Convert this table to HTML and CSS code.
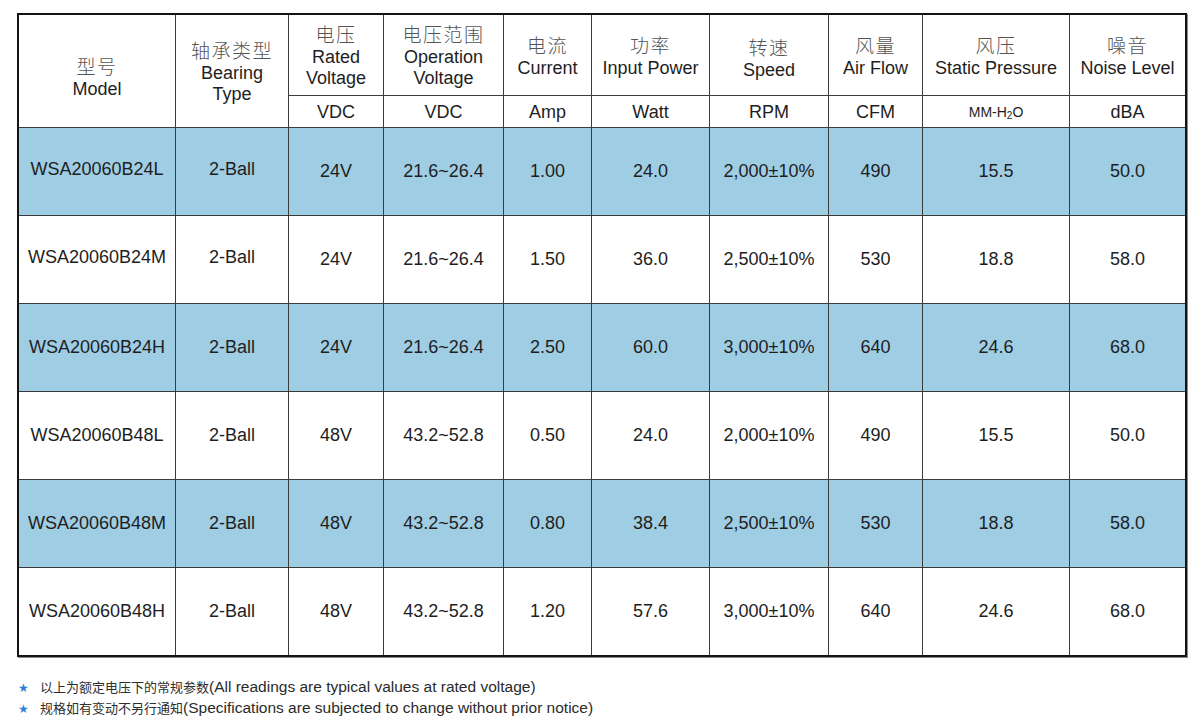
FILE: index.html
```html
<!DOCTYPE html>
<html lang="zh">
<head>
<meta charset="utf-8">
<title>WSA20060 规格表</title>
<link rel="stylesheet" href="styles.css">
</head>
<body>
<div class="page">
  <table class="spec">
    <colgroup>
      <col class="c1"><col class="c2"><col class="c3"><col class="c4"><col class="c5">
      <col class="c6"><col class="c7"><col class="c8"><col class="c9"><col class="c10">
    </colgroup>
    <thead>
      <tr class="head-top">
        <th rowspan="2" class="model-h"><span class="zh">型号</span><span class="en">Model</span></th>
        <th rowspan="2"><span class="zh">轴承类型</span><span class="en">Bearing<br>Type</span></th>
        <th><span class="zh">电压</span><span class="en">Rated<br>Voltage</span></th>
        <th><span class="zh">电压范围</span><span class="en">Operation<br>Voltage</span></th>
        <th><span class="zh">电流</span><span class="en">Current</span></th>
        <th><span class="zh">功率</span><span class="en">Input Power</span></th>
        <th class="speed-h"><span class="zh">转速</span><span class="en">Speed</span></th>
        <th><span class="zh">风量</span><span class="en">Air Flow</span></th>
        <th><span class="zh">风压</span><span class="en">Static Pressure</span></th>
        <th class="last"><span class="zh">噪音</span><span class="en">Noise Level</span></th>
      </tr>
      <tr class="units">
        <th>VDC</th>
        <th>VDC</th>
        <th>Amp</th>
        <th>Watt</th>
        <th>RPM</th>
        <th>CFM</th>
        <th class="small">MM-H<sub>2</sub>O</th>
        <th class="last">dBA</th>
      </tr>
    </thead>
    <tbody>
      <tr class="blue">
        <td class="hi">WSA20060B24L</td><td class="hi">2-Ball</td><td>24V</td><td>21.6~26.4</td><td>1.00</td>
        <td>24.0</td><td>2,000±10%</td><td>490</td><td>15.5</td><td class="last">50.0</td>
      </tr>
      <tr>
        <td class="hi">WSA20060B24M</td><td class="hi">2-Ball</td><td>24V</td><td>21.6~26.4</td><td>1.50</td>
        <td>36.0</td><td>2,500±10%</td><td>530</td><td>18.8</td><td class="last">58.0</td>
      </tr>
      <tr class="blue">
        <td>WSA20060B24H</td><td>2-Ball</td><td>24V</td><td>21.6~26.4</td><td>2.50</td>
        <td>60.0</td><td>3,000±10%</td><td>640</td><td>24.6</td><td class="last">68.0</td>
      </tr>
      <tr>
        <td>WSA20060B48L</td><td>2-Ball</td><td>48V</td><td>43.2~52.8</td><td>0.50</td>
        <td>24.0</td><td>2,000±10%</td><td>490</td><td>15.5</td><td class="last">50.0</td>
      </tr>
      <tr class="blue">
        <td>WSA20060B48M</td><td>2-Ball</td><td>48V</td><td>43.2~52.8</td><td>0.80</td>
        <td>38.4</td><td>2,500±10%</td><td>530</td><td>18.8</td><td class="last">58.0</td>
      </tr>
      <tr class="end">
        <td>WSA20060B48H</td><td>2-Ball</td><td>48V</td><td>43.2~52.8</td><td>1.20</td>
        <td>57.6</td><td>3,000±10%</td><td>640</td><td>24.6</td><td class="last">68.0</td>
      </tr>
    </tbody>
  </table>

  <ul class="notes">
    <li><span class="star">★</span><span class="nzh">以上为额定电压下的常规参数</span><span class="nen">(All readings are typical values at rated voltage)</span></li>
    <li><span class="star">★</span><span class="nzh">规格如有变动不另行通知</span><span class="nen">(Specifications are subjected to change without prior notice)</span></li>
  </ul>
</div>
</body>
</html>
```

FILE: styles.css
```css
html, body {
  margin: 0;
  padding: 0;
  background: #ffffff;
}

.page {
  padding: 13px 0 0 17px;
  font-family: "Liberation Sans", Arial, "Noto Sans CJK SC", sans-serif;
  color: #1e1e1e;
}

.spec {
  width: 1170px;
  table-layout: fixed;
  border-collapse: separate;
  border-spacing: 0;
  border: 2px solid #141414;
  box-shadow: 1px 1px 0 #8a8a8a;
}

.c1 { width: 157px; }
.c2 { width: 113px; }
.c3 { width: 95px; }
.c4 { width: 120px; }
.c5 { width: 88px; }
.c6 { width: 118px; }
.c7 { width: 119px; }
.c8 { width: 94px; }
.c9 { width: 147px; }
.c10 { width: 115px; }

.spec th,
.spec td {
  padding: 0;
  text-align: center;
  vertical-align: middle;
  border-right: 1px solid #3a3a3a;
  border-bottom: 1px solid #3a3a3a;
  font-weight: normal;
  font-size: 18px;
  line-height: 21px;
  color: #1e1e1e;
  box-sizing: border-box;
}

.spec .last {
  border-right: none;
}

.head-top th {
  height: 81px;
}

.head-top .model-h {
  padding-top: 10px;
}

.head-top .speed-h {
  padding-top: 4px;
}

.units th {
  height: 32px;
  padding-top: 1px;
}

.units th.small {
  font-size: 14px;
}

.units sub {
  font-size: 10px;
  vertical-align: -2px;
  line-height: 0;
}

.zh {
  display: block;
  font-family: "Noto Sans CJK SC", sans-serif;
  font-weight: 300;
  font-size: 19px;
  line-height: 26px;
  color: #555555;
  letter-spacing: 1.5px;
}

.en {
  display: block;
}

.spec tbody td {
  height: 88px;
}

.spec tbody tr.end td {
  border-bottom: none;
  height: 87px;
}

.spec tbody td.hi {
  padding-bottom: 4px;
}

.blue td {
  background: #9ecde4;
}

.notes {
  list-style: none;
  margin: 19px 0 0 0;
  padding: 0;
}

.notes li {
  display: flex;
  align-items: center;
  height: 21px;
  line-height: 21px;
}

.star {
  width: 23px;
  padding-left: 1px;
  box-sizing: border-box;
  color: #2f7fd0;
  font-family: "DejaVu Sans", sans-serif;
  font-size: 12px;
  line-height: 21px;
  position: relative;
  top: 2px;
}

.nzh {
  font-family: "Noto Sans CJK SC", sans-serif;
  font-size: 13px;
  color: #2e2e2e;
}

.nen {
  font-size: 15.5px;
  color: #2a2a2a;
}
```
